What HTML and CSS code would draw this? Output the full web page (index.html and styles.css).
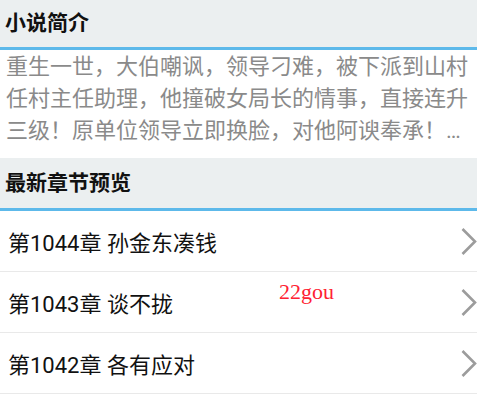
FILE: index.html
```html
<!DOCTYPE html>
<html lang="zh-CN">
<head>
    <meta charset="UTF-8">
    <meta name="viewport" content="width=device-width, initial-scale=1.0">
    <title>小说简介</title>
    <link rel="stylesheet" href="styles.css">
</head>
<body>
    <div class="page">
        <h2 class="section-title first">小说简介</h2>
        <div class="intro-box">
            <p class="intro">重生一世，大伯嘲讽，领导刁难，被下派到山村任村主任助理，他撞破女局长的情事，直接连升三级！原单位领导立即换脸，对他阿谀奉承！趁势而起，步步高升，成就一番传奇人生。</p>
        </div>

        <h2 class="section-title">最新章节预览</h2>
        <ul class="chapters">
            <li><a href="#">第1044章 孙金东凑钱</a></li>
            <li><a href="#">第1043章 谈不拢</a></li>
            <li><a href="#">第1042章 各有应对</a></li>
        </ul>

        <span class="watermark">22gou</span>
    </div>
</body>
</html>
```

FILE: styles.css
```css
body {
    margin: 0;
    background-color: #ffffff;
    font-family: Roboto, "Noto Sans CJK SC", sans-serif;
}
.page {
    position: relative;
    width: 477px;
    overflow: hidden;
}
.section-title {
    margin: 0;
    height: 50px;
    line-height: 50px;
    padding-left: 5px;
    font-size: 21px;
    font-weight: bold;
    color: #111;
    background-color: #ebeff0;
    border-bottom: 3px solid #5db9ea;
}
.section-title.first {
    height: 47px;
    line-height: 46px;
}
.intro-box {
    padding: 1px 4px 11px 6px;
}
.intro {
    margin: 0;
    font-size: 22px;
    line-height: 32px;
    color: #8a8a8a;
    display: -webkit-box;
    -webkit-box-orient: vertical;
    -webkit-line-clamp: 3;
    overflow: hidden;
    max-height: 96px;
}
.chapters {
    list-style: none;
    margin: 0;
    padding: 0;
}
.chapters li {
    border-bottom: 1px solid #e9e9e9;
}
.chapters a {
    display: flex;
    align-items: center;
    height: 60px;
    padding-left: 8px;
    font-size: 22px;
    color: #111;
    text-decoration: none;
    background: no-repeat right 0 center / 16px 27px
        url("data:image/svg+xml,%3Csvg xmlns='http://www.w3.org/2000/svg' viewBox='0 0 16 27'%3E%3Cpath d='M1.5 1 L14 13.5 L1.5 26' fill='none' stroke='%239c9c9c' stroke-width='2.6'/%3E%3C/svg%3E");
}
.watermark {
    position: absolute;
    left: 279px;
    top: 279px;
    font-family: "Liberation Serif", serif;
    font-size: 22px;
    color: #ff2233;
}
```
